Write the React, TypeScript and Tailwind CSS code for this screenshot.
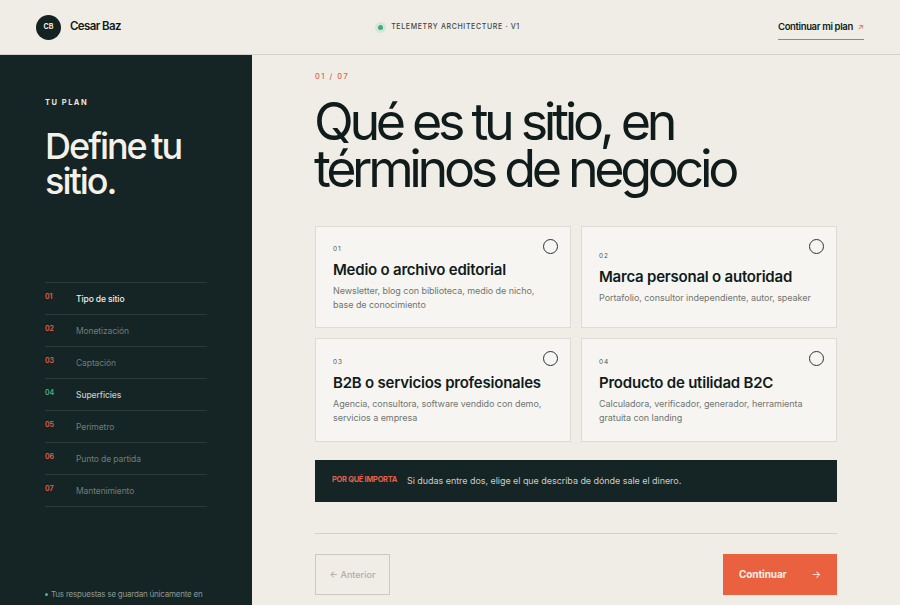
const steps = [
  { n: "01", label: "Tipo de sitio", text: "text-[#f1ede6] font-medium", num: "text-[#e4604a]" },
  { n: "02", label: "Monetización", text: "text-[#6f7f79]", num: "text-[#e4604a]" },
  { n: "03", label: "Captación", text: "text-[#6f7f79]", num: "text-[#e4604a]" },
  { n: "04", label: "Superficies", text: "text-[#c3cbc6] font-medium", num: "text-[#4fb286]" },
  { n: "05", label: "Perímetro", text: "text-[#6f7f79]", num: "text-[#e4604a]" },
  { n: "06", label: "Punto de partida", text: "text-[#6f7f79]", num: "text-[#e4604a]" },
  { n: "07", label: "Mantenimiento", text: "text-[#6f7f79]", num: "text-[#e4604a]" },
];

const cards = [
  { n: "01", title: "Medio o archivo editorial", desc: "Newsletter, blog con biblioteca, medio de nicho, base de conocimiento" },
  { n: "02", title: "Marca personal o autoridad", desc: "Portafolio, consultor independiente, autor, speaker" },
  { n: "03", title: "B2B o servicios profesionales", desc: "Agencia, consultora, software vendido con demo, servicios a empresa" },
  { n: "04", title: "Producto de utilidad B2C", desc: "Calculadora, verificador, generador, herramienta gratuita con landing" },
];

export default function App() {
  return (
    <div className="flex h-[605px] w-[900px] flex-col overflow-hidden bg-[#f0ede6] font-['Inter',sans-serif] text-[#101b1b]">
      <header className="grid h-[55px] shrink-0 grid-cols-[1fr_auto_1fr] items-center border-b border-[#d5d1ca] px-9">
        <div className="flex items-center gap-[9px]">
          <div className="flex h-[25px] w-[25px] items-center justify-center rounded-full bg-[#142222] text-[7px] font-bold text-[#f0ede6]">CB</div>
          <span className="text-[11.5px] font-semibold tracking-[-0.6px]">Cesar Baz</span>
        </div>
        <div className="flex items-center gap-2 pr-[2px]">
          <span className="h-[5px] w-[5px] rounded-full bg-[#46a878] shadow-[0_0_0_3px_#d3e6d8]" />
          <span className="text-[7px] font-medium tracking-[0.65px] text-[#3d4746]">TELEMETRY ARCHITECTURE · V1</span>
        </div>
        <div className="flex h-[25px] w-[86px] items-start justify-between justify-self-end border-b border-[#8a8a84] pt-[5px]">
          <span className="whitespace-nowrap text-[9.5px] font-semibold tracking-[-0.35px]">Continuar mi plan</span>
          <span className="text-[8px] leading-[14px] text-[#e4604a]">↗</span>
        </div>
      </header>

      <div className="flex min-h-0 flex-1">
        <aside className="flex w-[252px] shrink-0 flex-col bg-[#152424] px-[45px] pt-[43px]">
          <div className="text-[7.5px] font-bold leading-[9px] tracking-[1.5px] text-[#e8e6df]">TU PLAN</div>
          <h2 className="mt-[22px] text-[36px] font-medium leading-[35px] tracking-[-2px] text-[#f4f1ea] [word-spacing:-2px]">Define tu sitio.</h2>
          <nav className="mt-[83px] border-t border-[#2c3b3a]">
            {steps.map((s) => (
              <div key={s.n} className="flex h-[32px] items-center border-b border-[#2c3b3a] pt-px">
                <span className={`-mt-[3px] w-[31px] text-[7px] font-semibold ${s.num}`}>{s.n}</span>
                <span className={`text-[8.5px] tracking-[-0.1px] ${s.text}`}>{s.label}</span>
              </div>
            ))}
          </nav>
          <p className="mt-[80px] whitespace-nowrap text-[8px] leading-[14px] tracking-[-0.22px] text-[#8b9a94]">
            <span className="mb-[1px] mr-[3px] inline-block h-[3px] w-[3px] rounded-full bg-[#4fb286]" />
            Tus respuestas se guardan únicamente en
            <br />
            este navegador.
          </p>
        </aside>

        <main className="min-w-0 flex-1 px-[63px] pt-[17px]">
          <div className="text-[7.5px] font-medium leading-[9px] tracking-[1.5px] text-[#e4604a]">01 / 07</div>
          <h1 className="-ml-px mt-[17px] text-[52px] font-normal leading-[47px] tracking-[-4.35px] text-[#101b1b]">
            Qué es tu sitio, en
            <br />
            términos de negocio
          </h1>
          <div className="mt-[34px] grid grid-cols-2 grid-rows-[102px_104px] gap-2.5">
            {cards.map((c) => (
              <div key={c.n} className="relative flex flex-col justify-center border border-[#dfdbd4] bg-[#f7f5f1] pl-[17px] pr-5 pt-[2px]">
                <span className="absolute right-[12px] top-[12px] h-[15px] w-[15px] rounded-full border border-[#2a3535]" />
                <div className="text-[6.5px] leading-[8px] tracking-[1px] text-[#4c5554]">{c.n}</div>
                <div className="mt-[7px] text-[15px] font-semibold leading-[20px] tracking-[-0.22px] text-[#101b1b]">{c.title}</div>
                <p className="mt-1 text-[9px] leading-[14px] tracking-[-0.06px] text-[#6f7571]">{c.desc}</p>
              </div>
            ))}
          </div>
          <div className="mt-[18px] flex h-[42px] items-center bg-[#152424] pl-[17px]">
            <span className="-mt-0.5 w-[75px] text-[7.5px] font-bold tracking-[-0.3px] text-[#e4604a]">POR QUÉ IMPORTA</span>
            <span className="text-[9px] tracking-[-0.05px] text-[#c9cec8]">Si dudas entre dos, elige el que describa de dónde sale el dinero.</span>
          </div>
          <div className="mt-[31px] flex items-center justify-between border-t border-[#d5d1ca] pt-5">
            <button className="flex h-[41px] w-[75px] items-center justify-center border border-[#cdc9c2] text-[9px] font-medium text-[#aeaca6]">← Anterior</button>
            <button className="flex h-[41px] w-[114px] items-center justify-between bg-[#e9613f] px-4 text-[10px] font-bold tracking-[-0.1px] text-[#f8f1e9]">
              <span>Continuar</span>
              <span className="font-normal">→</span>
            </button>
          </div>
        </main>
      </div>
    </div>
  );
}
